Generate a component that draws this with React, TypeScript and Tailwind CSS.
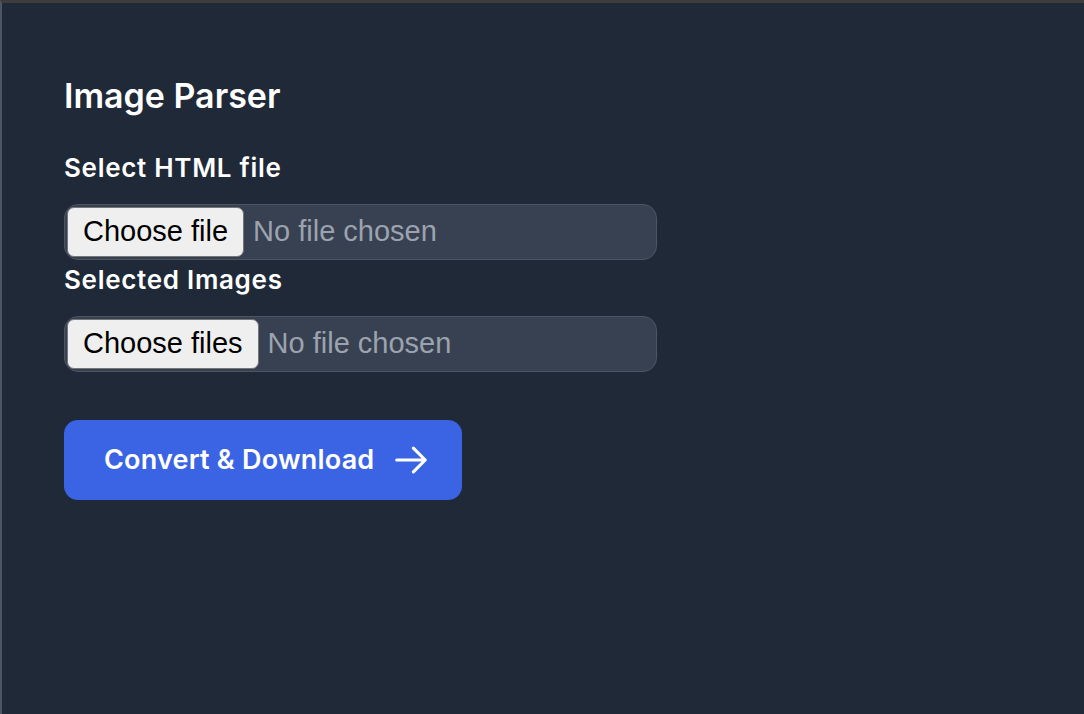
import React, { useState } from "react";

const FilePicker = ({
  buttonText,
  multiple = false,
}: {
  buttonText: string;
  multiple?: boolean;
}) => {
  const [names, setNames] = useState<string>("");

  const handleChange = (e: React.ChangeEvent<HTMLInputElement>) => {
    const files = e.target.files;
    if (!files || files.length === 0) return setNames("");
    setNames(files.length === 1 ? files[0].name : `${files.length} files`);
  };

  return (
    <label className="flex h-[56px] w-[593px] cursor-pointer items-center rounded-[14px] border border-[#4b5563] bg-[#374151] p-[2px] font-['Liberation_Sans',Arial,sans-serif] text-[29px]">
      <input type="file" multiple={multiple} onChange={handleChange} className="hidden" />
      <span className="flex h-[50px] items-center rounded-[7px] border border-[#767676] bg-[#efefef] px-[15px] text-black">
        {buttonText}
      </span>
      <span className="ml-[9px] text-[#9ca3af]">{names || "No file chosen"}</span>
    </label>
  );
};

export default function App() {
  return (
    <div className="min-h-screen border-l-2 border-t-[3px] border-l-[#4b5563] border-t-[#3d3d3d] bg-[#1f2937] font-['Inter',sans-serif] text-white">
      <div className="pl-[62px] pt-[73px]">
        <h1 className="mb-[36px] text-[34px] font-semibold leading-[40px]">Image Parser</h1>

        <div className="flex flex-col">
          <label className="mb-[20px] text-[26px] font-semibold leading-[32px] tracking-[0.7px]">Select HTML file</label>
          <FilePicker buttonText="Choose file" />

          <label className="mb-[20px] mt-[4px] text-[26px] font-semibold leading-[32px] tracking-[0.7px]">Selected Images</label>
          <FilePicker buttonText="Choose files" multiple />
        </div>

        <button className="mt-[48px] flex h-[80px] w-[398px] items-center rounded-[14px] bg-[#3a64e4] pl-[40px] text-[27px] font-semibold tracking-[0.2px] text-white">
          Convert &amp; Download
          <svg
            className="ml-[18px] h-[38px] w-[38px]"
            viewBox="0 0 24 24"
            fill="none"
            stroke="currentColor"
            strokeWidth={2}
            strokeLinecap="round"
            strokeLinejoin="round"
          >
            <path d="M13.5 4.5 21 12m0 0-7.5 7.5M21 12H3" />
          </svg>
        </button>
      </div>
    </div>
  );
}
